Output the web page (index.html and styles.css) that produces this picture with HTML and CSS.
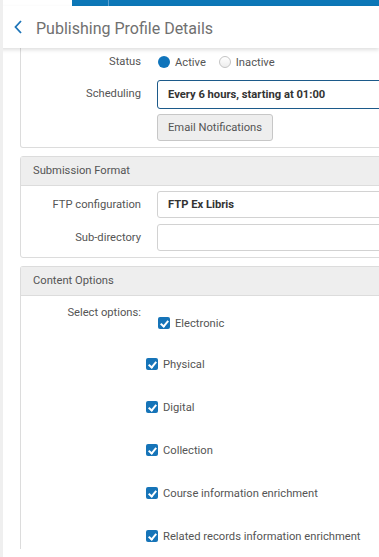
FILE: index.html
```html
<!DOCTYPE html>
<html lang="en">
<head>
    <meta charset="UTF-8">
    <meta name="viewport" content="width=device-width, initial-scale=1.0">
    <title>Publishing Profile Details</title>
    <link rel="stylesheet" href="styles.css">
</head>
<body>
    <div class="topbar"><span class="topbar-tab"></span></div>

    <div class="page-header">
        <svg class="back-icon" width="10" height="14" viewBox="0 0 10 14">
            <path d="M8 1 L2.5 7 L8 13" fill="none" stroke="#1d74b8" stroke-width="1.8"/>
        </svg>
        <h1 class="page-title">Publishing Profile Details</h1>
    </div>

    <div class="content">
        <!-- General -->
        <div class="panel panel-cut">
            <div class="form-row row-status">
                <label class="form-label">Status</label>
                <div class="form-control radios">
                    <span class="radio checked"></span><span class="radio-text">Active</span>
                    <span class="radio"></span><span class="radio-text">Inactive</span>
                </div>
            </div>
            <div class="form-row row-sched">
                <label class="form-label">Scheduling</label>
                <div class="form-control">
                    <div class="input input-focus">Every 6 hours, starting at 01:00</div>
                    <button class="btn">Email Notifications</button>
                </div>
            </div>
        </div>

        <!-- Submission Format -->
        <div class="panel">
            <div class="panel-header">Submission Format</div>
            <div class="panel-body">
                <div class="form-row">
                    <label class="form-label">FTP configuration</label>
                    <div class="form-control"><div class="input">FTP Ex Libris</div></div>
                </div>
                <div class="form-row">
                    <label class="form-label">Sub-directory</label>
                    <div class="form-control"><div class="input"></div></div>
                </div>
            </div>
        </div>

        <!-- Content Options -->
        <div class="panel panel-last">
            <div class="panel-header">Content Options</div>
            <div class="panel-body options-body">
                <div class="form-row row-options">
                    <label class="form-label">Select options:</label>
                    <div class="form-control">
                        <div class="check-item first"><span class="checkbox"></span>Electronic</div>
                    </div>
                </div>
                <div class="check-list">
                    <div class="check-item"><span class="checkbox"></span>Physical</div>
                    <div class="check-item"><span class="checkbox"></span>Digital</div>
                    <div class="check-item"><span class="checkbox"></span>Collection</div>
                    <div class="check-item"><span class="checkbox"></span>Course information enrichment</div>
                    <div class="check-item"><span class="checkbox"></span>Related records information enrichment</div>
                </div>
            </div>
        </div>
    </div>
</body>
</html>
```

FILE: styles.css
```css
html, body {
    overflow: hidden;
}

body {
    margin: 0;
    font-family: Roboto, "Liberation Sans", sans-serif;
    font-size: 11.2px;
    color: #444;
    background: #fff;
    width: 379px;
    height: 557px;
    border-left: 3px solid #efefef;
    box-sizing: border-box;
}

.topbar {
    height: 6px;
    margin-left: 69px;
    background: #0c77b7;
    position: relative;
}

.topbar-tab {
    position: absolute;
    left: 36px;
    top: 0;
    width: 1px;
    height: 6px;
    background: #5b9fcf;
}

.page-header {
    position: relative;
    z-index: 2;
    height: 42px;
    margin-left: -3px;
    padding-left: 13px;
    display: flex;
    align-items: center;
    background: #fff;
    box-shadow: 0 2px 4px rgba(0,0,0,0.13);
}

.back-icon {
    flex-shrink: 0;
}

.page-title {
    margin: 0 0 0 13px;
    font-size: 16px;
    font-weight: 400;
    color: #707070;
    position: relative;
    top: 1px;
}

.content {
    padding-left: 17px;
    width: 460px;
}

.panel {
    border: 1px solid #dcdcdc;
    border-radius: 3px;
    margin-bottom: 8px;
}

.panel-cut {
    border-top: none;
    border-radius: 0 0 3px 3px;
    padding-top: 6px;
    padding-bottom: 6px;
}

.panel-last {
    border-bottom: none;
    border-radius: 3px 3px 0 0;
    margin-bottom: 0;
}

.panel-header {
    height: 28px;
    line-height: 28px;
    padding-left: 12px;
    background: #eeeeee;
    border-bottom: 1px solid #dcdcdc;
    color: #555;
}

.panel-body {
    padding: 5px 0 6px;
}

.form-row {
    display: flex;
    align-items: flex-start;
    margin-bottom: 6px;
}

.form-row:last-child {
    margin-bottom: 0;
}

.form-label {
    width: 120px;
    padding-right: 16px;
    text-align: right;
    flex-shrink: 0;
    line-height: 27px;
    color: #555;
}

.form-control {
    flex: 1;
}

.row-status .form-label {
    line-height: 16px;
}

.radios {
    display: flex;
    align-items: center;
    height: 16px;
}

.radio {
    width: 12px;
    height: 12px;
    border-radius: 50%;
    box-sizing: border-box;
    border: 1px solid #c4c4c4;
    background: linear-gradient(#fff, #ededed);
    margin-left: 1px;
}

.radio.checked {
    border: none;
    background: #0f74bb;
}

.radio-text {
    margin: 0 12px 0 5px;
    color: #555;
}

.row-sched {
    margin-top: 10px;
}

.input {
    height: 27px;
    line-height: 25px;
    box-sizing: border-box;
    border: 1px solid #d2d2d2;
    border-radius: 3px;
    padding-left: 10px;
    font-weight: 700;
    color: #333;
    background: #fff;
}

.input-focus {
    height: 29px;
    line-height: 27px;
    border-color: #1c5a8a;
}

.btn {
    display: block;
    margin-top: 5px;
    height: 27px;
    padding: 0 10px;
    font-family: inherit;
    font-size: 11.2px;
    color: #555;
    background: #eeeeee;
    border: 1px solid #c7c7c7;
    border-radius: 3px;
}

.options-body {
    padding-top: 10px;
}

.row-options .form-label {
    line-height: 14px;
    padding-right: 16px;
}

.check-item {
    display: flex;
    align-items: center;
    height: 14px;
    color: #555;
}

.check-item.first {
    margin-top: 10px;
    margin-left: 1px;
}

.checkbox {
    width: 12px;
    height: 12px;
    border-radius: 2px;
    background: #1674b8;
    margin-right: 5px;
    position: relative;
    flex-shrink: 0;
}

.checkbox::after {
    content: "";
    position: absolute;
    left: 4px;
    top: 1.5px;
    width: 3px;
    height: 6px;
    border: solid #fff;
    border-width: 0 2px 2px 0;
    transform: rotate(40deg);
}

.check-list {
    padding-left: 125px;
    padding-top: 21px;
}

.check-item + .check-item {
    margin-top: 29px;
}
```
